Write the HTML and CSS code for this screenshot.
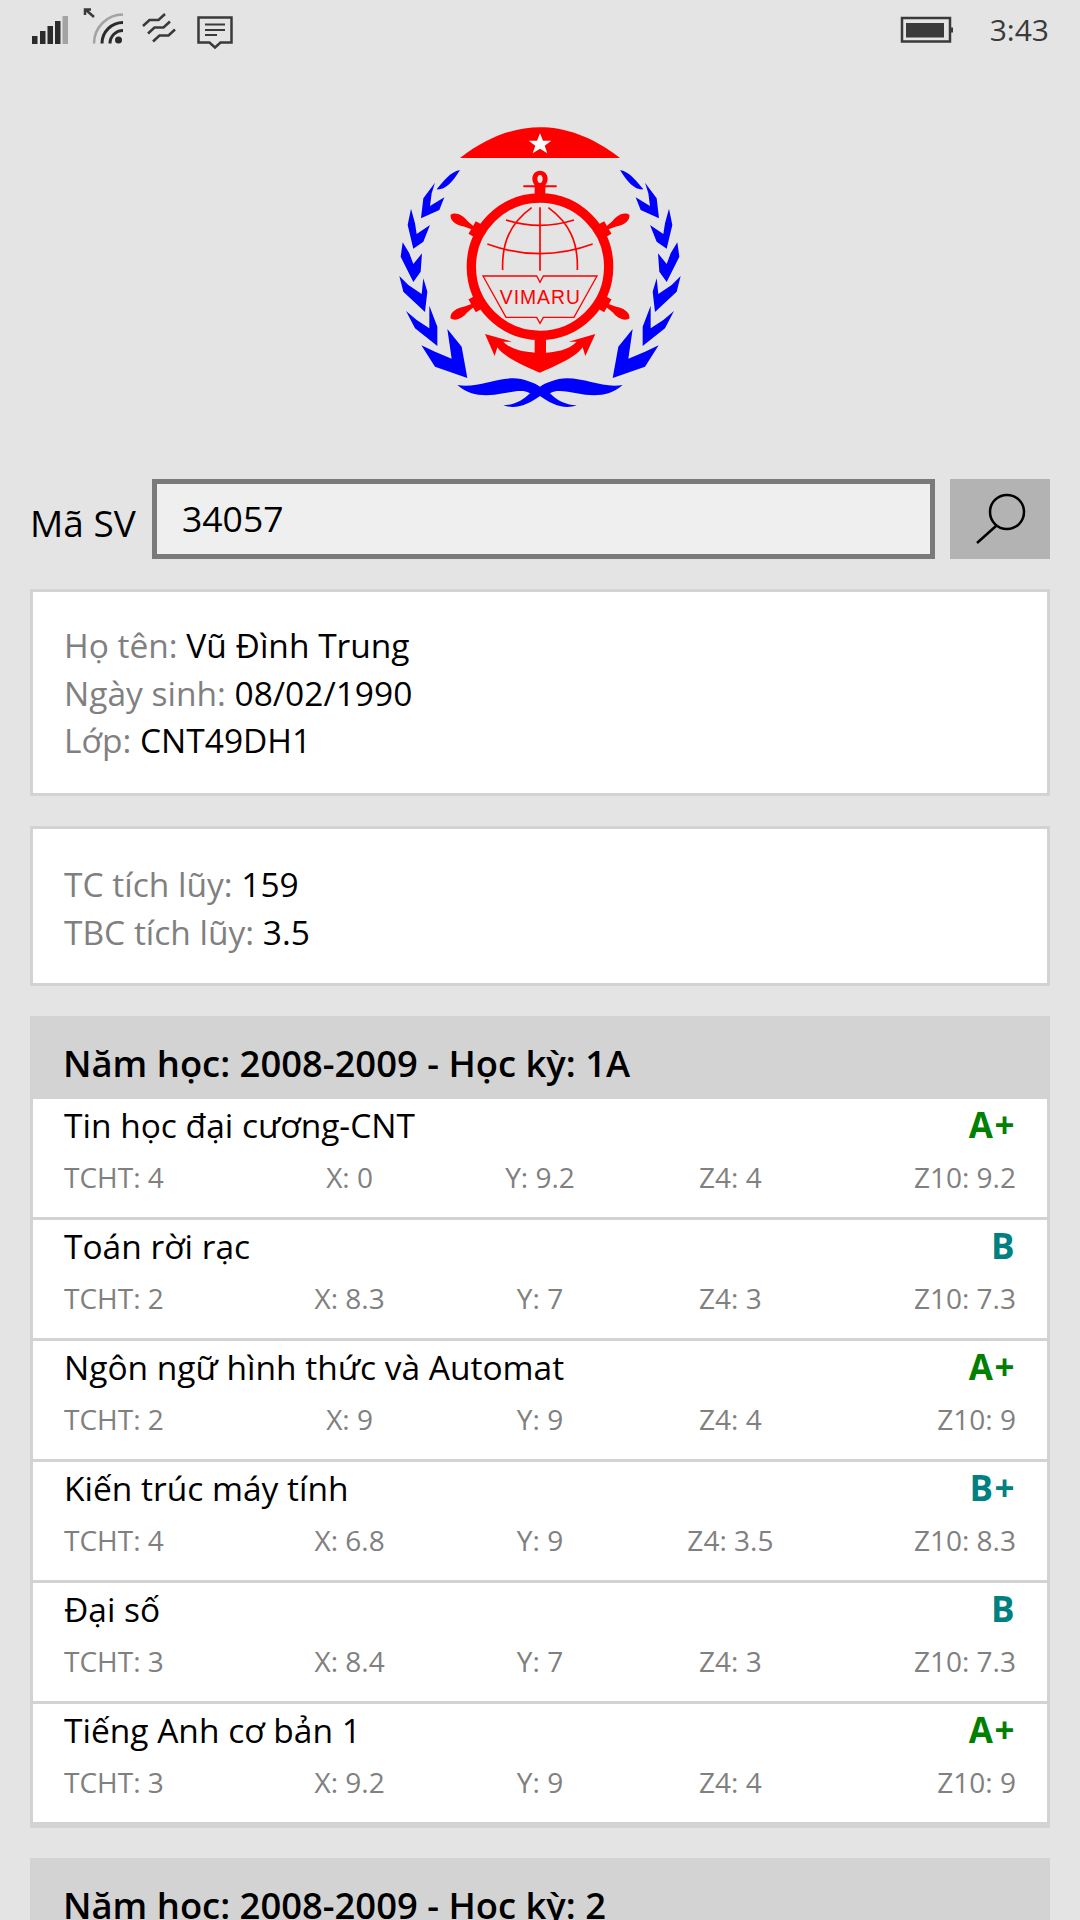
FILE: index.html
```html
<!DOCTYPE html>
<html lang="vi">
<head>
<meta charset="utf-8">
<title>Tra cứu điểm</title>
<link rel="stylesheet" href="styles.css">
</head>
<body>
<div class="status">
  <svg class="si" width="40" height="40" viewBox="30 10 40 40">
    <rect x="32" y="36" width="5.5" height="8" fill="#2b2b2b"/><rect x="40" y="31" width="5.5" height="13" fill="#2b2b2b"/><rect x="47.500" y="26" width="5.500" height="18" fill="#2b2b2b"/><rect x="55" y="21" width="5.500" height="23" fill="#2b2b2b"/><rect x="62.500" y="16" width="5.500" height="28" fill="#a3a3a3"/>
  </svg>
  <svg class="si g10" width="45" height="40" viewBox="80 5 45 40">
    <path d="M94 17L86 10M85 15V9.500H91" fill="none" stroke="#3a3a3a" stroke-width="2.500"/>
    <path d="M94 43.500A29 29 0 0 1 123 14.500" fill="none" stroke="#a3a3a3" stroke-width="2.500"/>
    <path d="M102 43.500A21 21 0 0 1 123 22.500M110 43.500A13 13 0 0 1 123 30.500" fill="none" stroke="#2b2b2b" stroke-width="3"/>
    <circle cx="118.500" cy="40" r="3.500" fill="#2b2b2b"/>
  </svg>
  <svg class="si g15" width="38" height="40" viewBox="140 10 38 40">
    <path d="M143 26L149.500 20H158.500L165 14M148 33.500L154.500 27.500H163.500L170 21.500M153 41.500L159.500 35.500H168.500L175 29.500" fill="none" stroke="#3a3a3a" stroke-width="2.600"/>
  </svg>
  <svg class="si g18" width="38" height="40" viewBox="196 10 38 40">
    <path d="M198.500 17.500H231.500V42.500H220.500L215 47.500L209.500 42.500H198.500Z" fill="none" stroke="#3a3a3a" stroke-width="2.500"/>
    <path d="M205 24.500H225M205 30H225M205 35H217" fill="none" stroke="#3a3a3a" stroke-width="2"/>
  </svg>
  <div class="status-right">
    <svg class="si" width="54" height="40" viewBox="898 10 54 40">
      <rect x="901" y="18" width="48" height="23.500" fill="none" stroke="#3a3a3a" stroke-width="2.500"/>
      <rect x="905" y="23" width="38" height="14.500" fill="#3a3a3a"/>
      <rect x="950" y="27.500" width="2.500" height="5" fill="#3a3a3a"/>
    </svg>
    <span class="time">3:43</span>
  </div>
</div>

<div class="logo">
  <svg width="320" height="310" viewBox="0 0 960 930">
    <defs>
      <g id="spoke">
        <path d="M170 470C178 452 205 453 222 460L250 465V475L222 480C205 487 178 488 170 470Z"/>
        <rect x="245" y="448" width="28" height="44"/>
      </g>
      <path id="laurel" d="M240 180C210 185 190 215 170 238C195 240 215 220 240 180ZM165 218L130 265L123 325L178 300L193 262L150 288L155 250ZM93 296L83 345L100 416L130 395L150 345L110 372L105 340ZM68 397L62 440L100 516L122 485L126 430L100 462L88 430ZM58 498L70 545L135 606L142 545L130 505L125 552L85 525ZM78 603L105 655L172 708L172 650L148 587L148 655L110 630ZM124 706L165 770L262 804L245 710L202 657L215 746L165 725Z"/>
    </defs>
    <g fill="#ff0000">
      <path d="M240 144C330 75 410 52 480 52C550 52 630 75 720 144Z"/>
      <use href="#spoke" transform="rotate(30 480 470)"/>
      <use href="#spoke" transform="rotate(150 480 470)"/>
      <use href="#spoke" transform="rotate(210 480 470)"/>
      <use href="#spoke" transform="rotate(330 480 470)"/>
      <path fill-rule="evenodd" d="M480 182C495 182 503 194 503 207C503 216 498 222 496 226H530V232H496V256H464V232H430V226H464C462 222 457 216 457 207C457 194 465 182 480 182ZM480 195C475 195 472 200 472 207C472 214 475 219 480 219C485 219 488 214 488 207C488 200 485 195 480 195Z"/>
      <path d="M464 686V728C440 726 395 722 370 695L396 695L315 672L344 738L352 712C375 745 440 770 480 788C520 770 585 745 608 712L616 738L646 672L566 695L590 695C565 722 520 726 498 728V686Z"/>
    </g>
    <circle cx="480" cy="470" r="206" fill="none" stroke="#ff0000" stroke-width="28"/>
    <path d="M480 70L489 92H514L494 107L502 130L480 116L458 130L466 107L446 92H471Z" fill="#fff"/>
    <g fill="none" stroke="#ff0000">
      <path stroke-width="5" d="M480 292V482M378 330Q480 362 582 330M322 402Q480 460 638 402M455 293C390 340 365 400 368 480M505 293C570 340 595 400 592 480"/>
      <path stroke-width="4" d="M309 498H470L480 517L490 498H651L582 622H490L480 640L470 622H378Z"/>
    </g>
    <text class="vimaru" x="481" y="582" text-anchor="middle">VIMARU</text>
    <g fill="#0000ff">
      <use href="#laurel"/>
      <use href="#laurel" transform="translate(960 0) scale(-1 1)"/>
      <path d="M232 825C290 835 340 805 400 805C430 805 465 820 480 830C495 820 530 805 560 805C620 805 670 835 728 825C690 860 640 860 590 850C560 845 530 838 510 850C530 870 555 885 590 886C550 900 510 880 480 858C450 880 410 900 370 886C405 885 430 870 450 850C430 838 400 845 370 850C320 860 270 860 232 825Z"/>
    </g>
  </svg>
</div>

<main class="content">
  <div class="search">
    <label class="search-label">Mã SV</label>
    <div class="search-input">34057</div>
    <div class="search-btn">
      <svg width="100" height="80" viewBox="950 479 100 80"><circle cx="1007" cy="512" r="17" fill="none" stroke="#000" stroke-width="2.500"/><path d="M996 526L977 543" stroke="#000" stroke-width="2.500"/></svg>
    </div>
  </div>

  <section class="card">
    <div><span class="k">Họ tên:</span> Vũ Đình Trung</div>
    <div><span class="k">Ngày sinh:</span> 08/02/1990</div>
    <div><span class="k">Lớp:</span> CNT49DH1</div>
  </section>

  <section class="card card-sum">
    <div><span class="k">TC tích lũy:</span> 159</div>
    <div><span class="k">TBC tích lũy:</span> 3.5</div>
  </section>

  <section class="group">
    <h2 class="group-head">Năm học: 2008-2009 - Học kỳ: 1A</h2>
    <article class="row">
      <div class="row-top"><span>Tin học đại cương-CNT</span><b class="grade green">A+</b></div>
      <div class="stats"><span>TCHT: 4</span><span>X: 0</span><span>Y: 9.2</span><span>Z4: 4</span><span>Z10: 9.2</span></div>
    </article>
    <article class="row">
      <div class="row-top"><span>Toán rời rạc</span><b class="grade teal">B</b></div>
      <div class="stats"><span>TCHT: 2</span><span>X: 8.3</span><span>Y: 7</span><span>Z4: 3</span><span>Z10: 7.3</span></div>
    </article>
    <article class="row">
      <div class="row-top"><span>Ngôn ngữ hình thức và Automat</span><b class="grade green">A+</b></div>
      <div class="stats"><span>TCHT: 2</span><span>X: 9</span><span>Y: 9</span><span>Z4: 4</span><span>Z10: 9</span></div>
    </article>
    <article class="row">
      <div class="row-top"><span>Kiến trúc máy tính</span><b class="grade teal">B+</b></div>
      <div class="stats"><span>TCHT: 4</span><span>X: 6.8</span><span>Y: 9</span><span>Z4: 3.5</span><span>Z10: 8.3</span></div>
    </article>
    <article class="row">
      <div class="row-top"><span>Đại số</span><b class="grade teal">B</b></div>
      <div class="stats"><span>TCHT: 3</span><span>X: 8.4</span><span>Y: 7</span><span>Z4: 3</span><span>Z10: 7.3</span></div>
    </article>
    <article class="row">
      <div class="row-top"><span>Tiếng Anh cơ bản 1</span><b class="grade green">A+</b></div>
      <div class="stats"><span>TCHT: 3</span><span>X: 9.2</span><span>Y: 9</span><span>Z4: 4</span><span>Z10: 9</span></div>
    </article>
  </section>

  <section class="group">
    <h2 class="group-head">Năm học: 2008-2009 - Học kỳ: 2</h2>
  </section>
</main>
</body>
</html>
```

FILE: styles.css
```css
* { box-sizing: border-box; }
html, body { margin: 0; padding: 0; height: 1920px; overflow: hidden; }
body { background: #e4e4e4; color: #000; font-family: "Open Sans", "Noto Sans", sans-serif; }

.status { height: 60px; display: flex; align-items: flex-start; padding: 10px 0 0 30px; }
.si { display: block; flex: none; }
.g10 { margin-left: 10px; margin-top: -5px; }
.g15 { margin-left: 15px; }
.g18 { margin-left: 18px; }
.status-right { margin-left: auto; display: flex; align-items: flex-start; padding-right: 31px; }
.time { font-size: 30px; font-weight: 400; line-height: 40px; margin-left: 37px; color: #3a3a3a; }

.logo { margin-top: 50px; height: 310px; display: flex; justify-content: center; }
.logo svg { display: block; }
.vimaru { font-family: "Liberation Sans", sans-serif; font-size: 58px; fill: #ff0000; letter-spacing: 3px; }

.content { padding: 59px 30px 0; display: flex; flex-direction: column; gap: 30px; }

.search { display: flex; align-items: stretch; height: 80px; }
.search-label { width: 122px; flex: none; font-size: 37px; line-height: 88px; }
.search-input { flex: 1; background: #efefef; border: 5px solid #7a7a7a; font-size: 35.500px; line-height: 68px; padding-left: 25px; }
.search-btn { width: 100px; margin-left: 15px; background: #b3b3b3; flex: none; }
.search-btn svg { display: block; }

.card { background: #fff; border: 3px solid #d3d3d3; padding: 30px 31px 28.500px; font-size: 33.500px; line-height: 47.500px; }
.card-sum { padding: 32px 31px 27px; }
.k { color: #808080; }

.group { border: 3px solid #d3d3d3; border-top: 0; border-bottom-width: 6px; background: #fff; }
.group-head { margin: 0 -3px; background: #d3d3d3; height: 83px; padding: 0 33px; font-size: 36.400px; font-weight: 600; line-height: 94px; }
.row { height: 121px; border-bottom: 3px solid #d3d3d3; padding: 0 31px; }
.row:last-child { height: 118px; border-bottom: 0; }
.row-top { display: flex; justify-content: space-between; font-size: 33.500px; line-height: 52px; }
.grade { font-size: 35px; font-weight: 700; letter-spacing: 1.500px; }
.green { color: #008000; }
.teal { color: #008080; }
.stats { display: grid; grid-template-columns: repeat(5, 1fr); color: #808080; font-size: 28px; line-height: 52px; text-align: center; }
.stats span:first-child { text-align: left; }
.stats span:last-child { text-align: right; }
```
